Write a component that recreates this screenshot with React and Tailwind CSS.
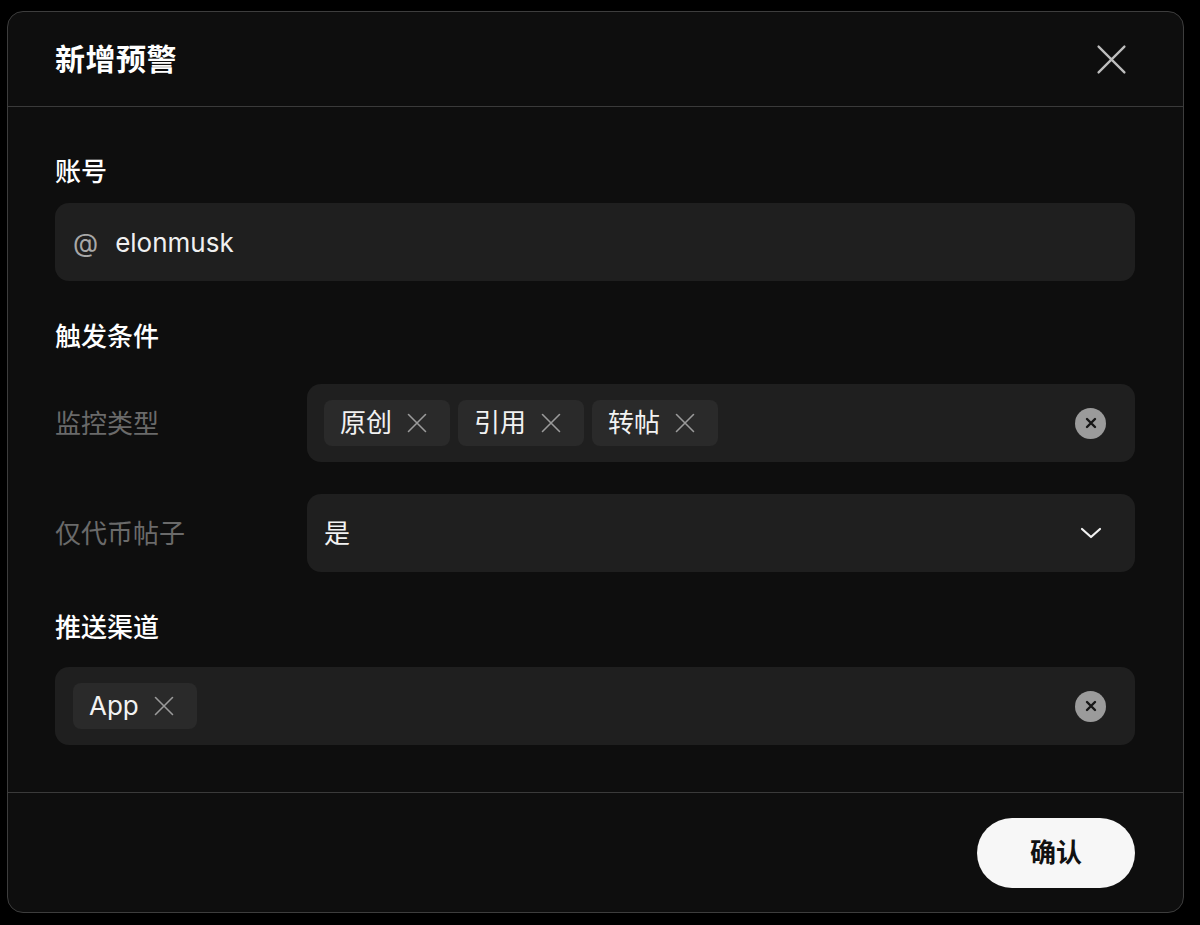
import React from "react";

const font = { fontFamily: "Inter, 'Noto Sans CJK SC', sans-serif" };

function XIcon({ className = "", size = 24, stroke = 2, inset = 3.5 }) {
  const a = inset;
  const b = 24 - inset;
  return (
    <svg width={size} height={size} viewBox="0 0 24 24" fill="none" stroke="currentColor" strokeWidth={stroke} strokeLinecap="round" className={className}>
      <path d={`M${a} ${a}L${b} ${b}M${b} ${a}L${a} ${b}`} />
    </svg>
  );
}

function ClearBtn() {
  return (
    <div className="w-[31px] h-[31px] rounded-full bg-[#9b9b9b] flex items-center justify-center text-[#161616]">
      <svg width="12" height="12" viewBox="0 0 12 12" fill="none" stroke="currentColor" strokeWidth="2.4" strokeLinecap="round">
        <path d="M2 2L10 10M10 2L2 10" />
      </svg>
    </div>
  );
}

function Tag({ label }) {
  return (
    <div className="h-[46px] rounded-[8px] bg-[#2a2a2a] flex items-center pl-[16px] pr-[21px] gap-[13px]">
      <span className="text-[26px] leading-none text-[#f2f2f2]">{label}</span>
      <XIcon size={24} stroke={1.6} inset={3.5} className="text-[#9a9a9a]" />
    </div>
  );
}

export default function App() {
  return (
    <div className="w-[1200px] h-[925px] bg-black pt-[11px] pl-[7px]" style={font}>
      <div className="w-[1177px] h-[902px] rounded-[16px] border border-[#3d3d3d] bg-[#0e0e0e] flex flex-col">
        {/* Header */}
        <div className="h-[95px] border-b border-[#3a3a3a] flex items-center justify-between pl-[47px] pr-[56px]">
          <h1 className="text-[30px] font-bold text-white tracking-[0.5px]">新增预警</h1>
          <XIcon size={31} stroke={1.8} inset={2} className="text-[#bdbdbd]" />
        </div>

        {/* Body */}
        <div className="flex-1 pl-[47px] pr-[48px] pt-[47px] flex flex-col">
          <div className="text-[26px] leading-[36px] font-medium text-white">账号</div>
          <div className="mt-[13px] h-[78px] rounded-[14px] bg-[#1f1f1f] flex items-center pl-[18px]">
            <span className="text-[26px] text-[#a8a8a8]">@</span>
            <span className="ml-[17px] text-[26px] text-[#f0f0f0]">elonmusk</span>
          </div>

          <div className="mt-[38px] text-[26px] leading-[36px] font-medium text-white">触发条件</div>

          <div className="mt-[29px] flex items-center">
            <div className="w-[252px] text-[26px] text-[#6a6a6a]">监控类型</div>
            <div className="flex-1 h-[78px] rounded-[14px] bg-[#1f1f1f] flex items-center pl-[17px] pr-[29px]">
              <div className="flex gap-[8px] flex-1">
                <Tag label="原创" />
                <Tag label="引用" />
                <Tag label="转帖" />
              </div>
              <ClearBtn />
            </div>
          </div>

          <div className="mt-[32px] flex items-center">
            <div className="w-[252px] text-[26px] text-[#6a6a6a]">仅代币帖子</div>
            <div className="flex-1 h-[78px] rounded-[14px] bg-[#1f1f1f] flex items-center pl-[17px] pr-[33px]">
              <span className="flex-1 text-[26px] text-[#f2f2f2]">是</span>
              <svg width="22" height="12" viewBox="0 0 22 12" fill="none" stroke="#f2f2f2" strokeWidth="2.2" strokeLinecap="round" strokeLinejoin="round">
                <path d="M2 2L11 10L20 2" />
              </svg>
            </div>
          </div>

          <div className="mt-[38px] text-[26px] leading-[36px] font-medium text-white">推送渠道</div>
          <div className="mt-[21px] h-[78px] rounded-[14px] bg-[#1f1f1f] flex items-center pl-[18px] pr-[29px]">
            <div className="flex-1 flex">
              <Tag label="App" />
            </div>
            <ClearBtn />
          </div>
        </div>

        {/* Footer */}
        <div className="h-[120px] border-t border-[#3a3a3a] flex items-center justify-end pr-[48px]">
          <button className="w-[158px] h-[70px] rounded-full bg-[#f7f7f7] text-[26px] font-bold text-[#111]">确认</button>
        </div>
      </div>
    </div>
  );
}
